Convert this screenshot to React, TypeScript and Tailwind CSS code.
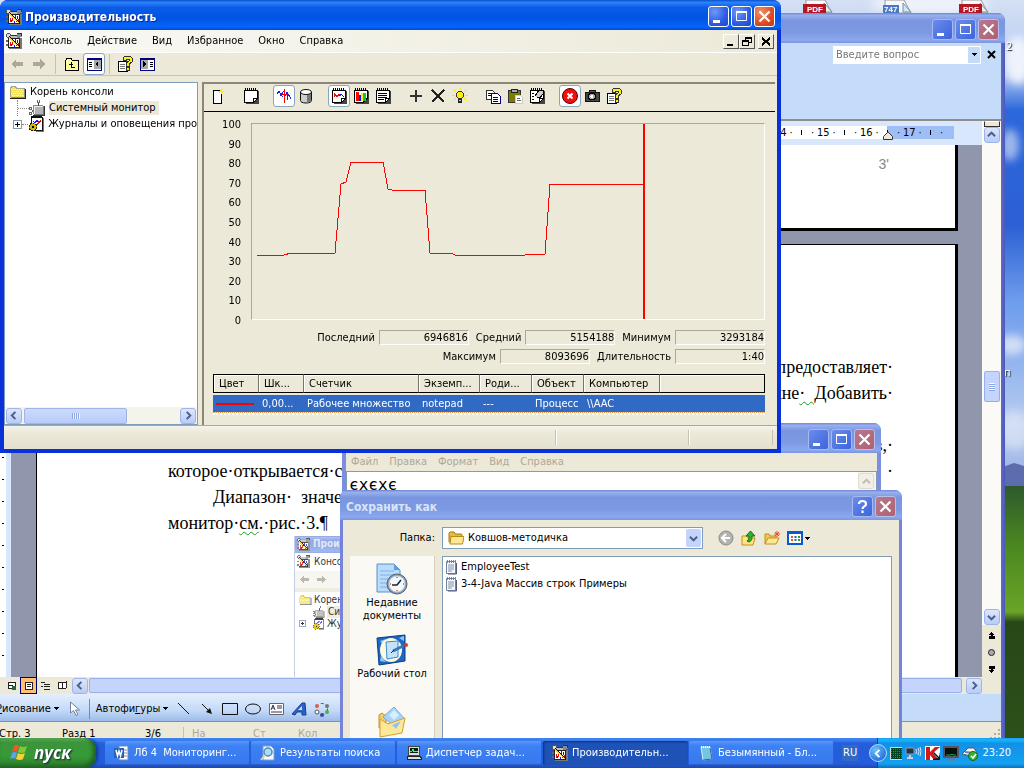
import type { ReactNode } from "react";

const ui = "font-['DejaVu_Sans_Condensed','DejaVu_Sans',sans-serif]";

/* ---------- icons ---------- */

function Px({ w = 16, h = 16, box, children }: { w?: number; h?: number; box?: string; children: ReactNode }) {
  return (
    <svg width={w} height={h} viewBox={box ?? `0 0 ${w} ${h}`} className="block shrink-0" shapeRendering="crispEdges" aria-hidden="true">
      {children}
    </svg>
  );
}

function Smooth({ w = 16, h = 16, box, children }: { w?: number; h?: number; box?: string; children: ReactNode }) {
  return (
    <svg width={w} height={h} viewBox={box ?? `0 0 ${w} ${h}`} className="block shrink-0" fill="none" aria-hidden="true">
      {children}
    </svg>
  );
}

const PerfIcon = () => (
  <Px>
    <path d="M1 0h3v1h1v3H4v1H1V4H0V1h1z" fill="#555" /><path d="M1 1h3v3H1z" fill="#ddd" />
    <path d="M3 3h10v2H3z" fill="#bbb" /><path d="M5 2h6v1H5z" fill="#333" />
    <path d="M11 1h5v3h-2v2h-3z" fill="#888" /><path d="M11 0h5v1h-5zM15 1h1v2h-1z" fill="#333" />
    <path d="M2 5h12v10H2z" fill="#222" /><path d="M3 6h10v8H3z" fill="#fff" />
    <path d="M14 5h2v11H3v-1h11z" fill="#777" /><path d="M0 7h2v2H0zM0 11h2v2H0z" fill="#666" />
    <path d="M4 13V9h1v4zM6 12V8h1v4zM10 13v-3h1v3zM12 14v-4h1v4z" fill="#e01010" /><path d="M5 11h1v2H5zM9 6h1v3H9zM11 7h1v3h-1zM8 12h1v2H8z" fill="#1020e0" />
    <path d="M2 4l1-1 11 11-1 1z" fill="#000" /><path d="M3 4h1v1h1v1h1v1h1v1h1v1h1v1h1v1h1v1h1v1h1v1h-1v-1h-1v-1h-1v-1H9v-1H8v-1H7V9H6V8H5V7H4V6H3z" fill="#ffd820" />
  </Px>
);
const FolderIcon = () => (
  <Px><path d="M0 3h1V2h5v1h1v1h7v10H0z" fill="#f4e45c" /><path d="M1 5h12M2 7h12M1 9h12M2 11h12" stroke="#fffbd0" strokeDasharray="1 1" /><path d="M.5 13V3.500h1V2.500h4v1h1v1h7" fill="none" stroke="#a8a488" /><path d="M0 14.500h15.500V5" stroke="#222" fill="none" /><path d="M1 13.500h13.500V4" stroke="#888" fill="none" /></Px>
);
const MonitorNode = () => (
  <Px><path d="M5 6h9v8H5z" fill="#b4b4b4" /><path d="M5.500 14V6.500H14" stroke="#eee" fill="none" /><path d="M4.500 14V5.500H14" fill="none" stroke="#888" /><path d="M4 15.500h11.500V6" fill="none" stroke="#333" /><path d="M5 14.500h9.500V6" fill="none" stroke="#777" /><path d="M9 3h1v3H9z" fill="#444" /><path d="M8 0h3v3H8z" fill="#666" /><path d="M9 0h1v2H9z" fill="#fff" /><path d="M0 7h3v3H0zM0 12h3v3H0z" fill="#666" /><path d="M1 8h1v1H1zM1 13h1v1H1z" fill="#fff" /><path d="M3 10h1v2H3z" fill="#666" /></Px>
);
const LogsNode = () => (
  <Px><path d="M3 1h11v13H3z" fill="#fff" stroke="#111" /><path d="M3 1h11" stroke="#111" strokeWidth="2" /><path d="M15 2v13H8" stroke="#777" fill="none" /><path d="M5 5l2 2 2-3 2 3 2-3" stroke="#11e" fill="none" /><path d="M8 10l5-6" stroke="#e11" /><circle cx="5" cy="11" r="4" fill="#d8b800" stroke="#222" strokeDasharray="2 1" /><path d="M4 10h2v2H4z" fill="#000" /></Px>
);
const ArrowGray = ({ flip }: { flip?: boolean }) => (
  <Px><path d={flip ? "M14 8l-5-5v3H2v4h7v3z" : "M2 8l5-5v3h7v4H7v3z"} fill="#aca899" /></Px>
);
const UpFolder = () => (
  <Px><path d="M1 4h1l1-2h4l1 2h6v10H1z" fill="#fffba0" stroke="#000" /><path d="M5 8h4M7 6v5h4" stroke="#000" fill="none" /><path d="M6 7h2V6h-1z" fill="#000" /></Px>
);
const Panes = ({ flip }: { flip?: boolean }) => (
  <Px><path d="M1 2h14v12H1z" fill="#fff" stroke="#000080" /><path d="M1 2h14v2H1z" fill="#000080" />{flip ? <><path d="M2 4h7v9H2z" fill="#aaa" /><path d="M4 5v6l3-3z" fill="#000" /><path d="M11 6h3M11 8h3M11 10h3" stroke="#000" /></> : <><path d="M8 4h7v9H8z" fill="#aaa" /><path d="M12 5v6L9 8z" fill="#000" /><path d="M3 6h3M3 8h3M3 10h3" stroke="#000" /></>}</Px>
);
const HelpPage = () => (
  <Px><path d="M1 5h9v10H1z" fill="#fff" stroke="#000" /><path d="M3 8h5M3 10h5M3 12h5" stroke="#777" /><path d="M6 4V2l2-2h5l2 2v4l-3 2v2H9V7l3-2V3H9v2z" fill="#ffee10" stroke="#333" /><path d="M9 11h3v3H9z" fill="#ffee10" stroke="#333" /></Px>
);
const NewPage = () => (
  <Px><path d="M3 2h8v13H3z" fill="#fff" stroke="#000" /><path d="M11 0v6M8 3h6M9 1l4 4M13 1l-4 4" stroke="#ffee00" /></Px>
);
const Pad = ({ children }: { children?: ReactNode }) => (
  <Px>
    <path d="M3 3h13v13H3z" fill="#444" /><path d="M1 2h13v9l-3 3H1z" fill="#fff" stroke="#000" />
    <path d="M10 14v-4h4" fill="none" stroke="#000" /><path d="M2 1h12" stroke="#000" strokeWidth="2" strokeDasharray="1 1" />{children}
  </Px>
);
const Activity = () => (
  <Px><path d="M1 6l2-3 2 4 2 2M9 8l2-4 4 7" stroke="#1020ff" fill="none" /><path d="M8 1v14M6 6h5" stroke="#f00" /><path d="M4 8l4-5M11 6v6" stroke="#1020ff" /></Px>
);
const Cylinder = () => (
  <Smooth><path d="M2.500 4v8.500c0 1.500 2 2.500 5.500 2.500s5.500-1 5.500-2.500V4" fill="#ccc" stroke="#111" /><path d="M9 6h4v7l-4 2z" fill="#777" /><ellipse cx="8" cy="4" rx="5.500" ry="2.500" fill="#fff" stroke="#111" /></Smooth>
);
const Plus = () => <Px><path d="M8 2v12M2 8h12" stroke="#333" strokeWidth="2" /></Px>;
const Cross = () => <Px><path d="M2 2l12 12M14 2L2 14" stroke="#222" strokeWidth="1.500" /></Px>;
const Bulb = () => (
  <Px><path d="M1 1l3 3M15 1l-3 3M0 7h3M13 7h3M1 13l3-3M15 13l-3-3M8 0v2" stroke="#f4e800" /><circle cx="8" cy="7" r="3.500" fill="#ffee00" stroke="#333" /><path d="M6 11h4v4H6z" fill="#222" /><path d="M7 12h2v1H7z" fill="#ccc" /></Px>
);
const CopyIcon = () => (
  <Px><path d="M1 2h6l2 2v7H1z" fill="#fff" stroke="#333" /><path d="M3 5h4M3 7h4" stroke="#000080" /><path d="M6 5h6l3 3v7H6z" fill="#fff" stroke="#000080" /><path d="M8 9h5M8 11h5M8 13h5" stroke="#000080" /></Px>
);
const PasteIcon = () => (
  <Px><path d="M1 2h12v12H1z" fill="#7c7a00" stroke="#333" /><path d="M4 1h6v3H4z" fill="#aaa" stroke="#222" /><path d="M8 7h5l2 2v6H8z" fill="#fff" stroke="#ccc" /><path d="M10 10h3M10 12h4" stroke="#666" /></Px>
);
const PropsIcon = () => (
  <Pad><path d="M3 5h2M3 8h2M3 11h2" stroke="#000" /><path d="M6 8l4-6 4 1v3l-3 4-3-1" fill="#ccc" stroke="#000" /></Pad>
);
const Camera = () => (
  <Px><path d="M5 2h6v3H5z" fill="#555" stroke="#111" /><path d="M1 4h14v9H1z" fill="#444" stroke="#111" /><circle cx="8" cy="8.500" r="3.500" fill="#aaa" stroke="#000" /><circle cx="8" cy="8.500" r="1.500" fill="#fff" /></Px>
);
const StopIcon = () => (
  <Smooth><circle cx="8" cy="8" r="7.500" fill="#f01010" stroke="#500" /><path d="M5.500 5.500l5 5M10.500 5.500l-5 5" stroke="#fff" strokeWidth="2" /></Smooth>
);
const Note = () => (
  <Smooth><path d="M3.500 2.500h9v12h-9z" fill="#f6f8ff" stroke="#7080a0" /><path d="M4 2.500h9" stroke="#c07820" strokeWidth="3" strokeDasharray="1 1" /><path d="M5 6h6M5 8h6M5 10h6M5 12h4" stroke="#8090a8" /><path d="M13.500 4v11H5" stroke="#555c78" /></Smooth>
);
const YellowFolder = () => (
  <Smooth><path d="M1 3.500Q1 2 2.500 2H6l1.500 2H13q1 0 1 1v7H1z" fill="#e8b840" stroke="#a87810" /><path d="M2 14l1-7.500h13L14.500 14z" fill="#ffe890" stroke="#b88a18" /></Smooth>
);
const Chevron = ({ dir, color = "#4d6185" }: { dir: "l" | "r" | "u" | "d"; color?: string }) => {
  const d = { l: "M6 1L2 5l4 4", r: "M3 1l4 4-4 4", u: "M1 7l4-4 4 4", d: "M1 3l4 4 4-4" }[dir];
  return <Smooth w={9} h={9} box="0 0 10 10"><path d={d} stroke={color} strokeWidth="2.200" /></Smooth>;
};
const Caret = () => <Px w={5} h={3}><path d="M0 0h5L2.500 3z" fill="#000" /></Px>;

/* ---------- shared controls ---------- */

type CapKind = "min" | "max" | "close" | "help";
function CaptionButton({ kind, active }: { kind: CapKind; active?: boolean }) {
  const tone = kind === "close"
    ? active ? "bg-[radial-gradient(circle_at_30%_25%,#f09070,#dc4c22_60%,#c03812)] border-white" : "bg-[linear-gradient(135deg,#b87890,#b06070)] border-[#b9bfe6]"
    : active ? "bg-[radial-gradient(circle_at_30%_25%,#7098f8,#2a5ce4_60%,#1c48c8)] border-white" : "bg-[linear-gradient(135deg,#6a8cec,#3c64dc)] border-[#a8b8f0]";
  const name = { min: "Свернуть", max: "Развернуть", close: "Закрыть", help: "Подсказка" }[kind];
  return (
    <button aria-label={name} className={`flex size-[21px] items-center justify-center rounded-[3px] border ${tone}`}>
      <Smooth w={19} h={19}>
        {kind === "min" && <path d="M4 13h7v3H4z" fill="#fff" />}
        {kind === "max" && <><path d="M4.500 5.500h10v8h-10z" stroke="#fff" /><path d="M4 4h11v2H4z" fill="#fff" /></>}
        {kind === "close" && <path d="M4.500 4.500l10 10M14.500 4.500l-10 10" stroke="#fff" strokeWidth="2.200" />}
        {kind === "help" && <path d="M6 7q0-3 3.500-3T13 7q0 1.500-1.700 2.400T9.500 12M9.500 13.500V16" stroke="#fff" strokeWidth="2.200" />}
      </Smooth>
    </button>
  );
}

const activeTitle = "bg-[linear-gradient(#0a50d0_0%,#2c82f8_8%,#0a5ce8_25%,#0054e3_60%,#0664fc_90%,#0048d0_100%)]";
const idleTitle = "bg-[linear-gradient(#7088d0_0%,#98b0ee_8%,#7b96e0_25%,#7d99e2_65%,#8aa8f0_90%,#7b96dc_100%)]";

function TitleBar({ title, icon, kinds, active }: { title: string; icon?: ReactNode; kinds: CapKind[]; active?: boolean }) {
  return (
    <header className={`flex h-[30px] items-center gap-[3px] rounded-t-[7px] pt-[3px] pr-[6px] pl-[6px] ${active ? activeTitle : idleTitle}`}>
      {icon}
      <h2 className={`grow text-xs font-bold whitespace-nowrap ${active ? "text-white [text-shadow:1px_1px_#0a2a88]" : "text-[#d8e4f8]"}`}>{title}</h2>
      <div className="flex gap-[2px]">{kinds.map((k) => <CaptionButton key={k} kind={k} active={active} />)}</div>
    </header>
  );
}

function ScrollButton({ dir, off }: { dir: "l" | "r" | "u" | "d"; off?: boolean }) {
  return (
    <button aria-label="Прокрутка" className={`flex size-4 shrink-0 items-center justify-center rounded-[3px] border ${off ? "border-[#dddbd0] bg-[#f2f0e6]" : "border-[#9fb5e8] bg-[linear-gradient(#dce6fe,#b8ccf8)]"}`}>
      <Chevron dir={dir} color={off ? "#c2c0b4" : undefined} />
    </button>
  );
}

function Tool({ label, on, children }: { label: string; on?: boolean; children: ReactNode }) {
  return (
    <button aria-label={label} className={`flex h-[22px] w-[22px] shrink-0 items-center justify-center rounded-[3px] border ${on ? "border-[#8aa5c0] bg-white" : "border-transparent"}`}>
      {children}
    </button>
  );
}

/* ---------- performance window ---------- */

const series: [number, number][] = [
  [5, 131], [32, 131], [39, 129], [83, 129], [89, 60], [94, 58], [99, 38], [131, 38], [136, 65], [140, 66], [173, 66],
  [178, 129], [199, 129], [203, 131], [273, 131], [278, 130], [293, 130], [298, 60], [392, 60],
];

function Readout({ id, label, value }: { id: string; label: string; value: string }) {
  return (
    <div className="flex items-center gap-1">
      <label htmlFor={id}>{label}</label>
      <input id={id} readOnly value={value} className="h-[15px] w-[90px] border border-t-[#aca899] border-r-white border-b-white border-l-[#aca899] bg-transparent text-right outline-none" />
    </div>
  );
}

const columns = [
  { name: "Цвет", w: "w-[46px]" }, { name: "Шк...", w: "w-[45px]" }, { name: "Счетчик", w: "w-[115px]" },
  { name: "Экземп...", w: "w-[61px]" }, { name: "Роди...", w: "w-[52px]" }, { name: "Объект", w: "w-[52px]" }, { name: "Компьютер", w: "w-[76px]" }, { name: "", w: "w-auto" },
];

function SystemMonitor() {
  const groups: { label: string; on?: boolean; icon: ReactNode }[][] = [
    [{ label: "Новый набор счетчиков", icon: <NewPage /> }],
    [{ label: "Очистить экран", icon: <Pad /> }],
    [{ label: "Текущая активность", on: true, icon: <Activity /> }, { label: "Данные журнала", icon: <Cylinder /> }],
    [
      { label: "График", on: true, icon: <Pad><path d="M3 9V5l3 4 2-3 2 2" stroke="#f00" fill="none" /><path d="M8 8l2-2 3 3" stroke="#11f" fill="none" /></Pad> },
      { label: "Гистограмма", icon: <Pad><path d="M3 4h3v9H3z" fill="#f00" /><path d="M6 7h2v6H6z" fill="#11f" /><path d="M8 5h2v8H8z" fill="#fe0" /><path d="M10 5h3v8h-3z" fill="#0c3" /></Pad> },
      { label: "Отчет", icon: <Pad><path d="M3 5h9M3 7h9M3 9h9M3 11h6" stroke="#000" /></Pad> },
    ],
    [{ label: "Добавить", icon: <Plus /> }, { label: "Удалить", icon: <Cross /> }, { label: "Выделить", icon: <Bulb /> }],
    [{ label: "Копировать", icon: <CopyIcon /> }, { label: "Вставить", icon: <PasteIcon /> }, { label: "Свойства", icon: <PropsIcon /> }],
    [{ label: "Зафиксировать", on: true, icon: <StopIcon /> }, { label: "Обновить", icon: <Camera /> }, { label: "Справка", icon: <HelpPage /> }],
  ];
  return (
    <section className="flex min-w-0 grow flex-col border-t-2 border-l-2 border-[#8a877a]">
      <div className="flex h-[28px] items-center gap-[11px] border-b border-black pb-[3px] pl-[3px]">
        {groups.map((g, i) => (
          <div key={i} className="flex">{g.map((t) => <Tool key={t.label} label={t.label} on={t.on}>{t.icon}</Tool>)}</div>
        ))}
      </div>
      <div className="flex gap-[10px] pt-[6px] pr-[10px]">
        <div className="-mb-2 flex w-[37px] flex-col justify-between text-right leading-[14px]">
          {[100, 90, 80, 70, 60, 50, 40, 30, 20, 10, 0].map((n) => <span key={n}>{n}</span>)}
        </div>
        <div className="mt-[5px] h-[197px] grow border border-t-[#aca899] border-r-white border-b-white border-l-[#aca899]">
          <svg width="100%" height="195" viewBox="0 0 512 195" preserveAspectRatio="none" className="block" shapeRendering="crispEdges">
            <polyline points={series.map((p) => p.join(",")).join(" ")} fill="none" stroke="#f00" />
            <path d="M392 0v195" stroke="#f00" strokeWidth="2" />
          </svg>
        </div>
      </div>
      <div className="mt-[10px] flex flex-col items-end gap-1 pr-[10px]">
        <div className="flex gap-[7px]">
          <Readout id="last" label="Последний" value="6946816" /><Readout id="avg" label="Средний" value="5154188" /><Readout id="min" label="Минимум" value="3293184" />
        </div>
        <div className="flex gap-[7px]">
          <Readout id="max" label="Максимум" value="8093696" /><Readout id="dur" label="Длительность" value="1:40" />
        </div>
      </div>
      <div className="mt-[10px] mr-[10px] ml-[9px]">
        <table className="w-full table-fixed border-separate border-spacing-0 text-left whitespace-nowrap">
          <thead>
            <tr>
              {columns.map((c, i) => (
                <th key={i} className={`${c.w} h-[19px] overflow-hidden border-t border-r border-b border-t-black border-r-[#77746a] border-b-black pl-[5px] font-normal shadow-[inset_1px_1px_#fff] first:border-l first:border-l-black last:border-r-black`}>{c.name}</th>
              ))}
            </tr>
          </thead>
          <tbody>
            <tr className="text-white [&>td]:h-[19px] [&>td]:border-t-2 [&>td]:border-[#ece9d8] [&>td]:bg-[#316ac5] [&>td]:pl-[3px]">
              <td><svg width="38" height="2" className="block" aria-hidden="true"><path d="M0 0h38v2H0z" fill="#f00" /></svg></td>
              <td>0,00...</td><td>Рабочее множество</td><td>notepad</td><td>---</td><td>Процесс</td><td>\\AAC</td><td />
            </tr>
          </tbody>
        </table>
        <div className="border-t border-b-2 border-dotted border-t-[#e0a050] border-b-white" />
      </div>
    </section>
  );
}

function ConsoleTree() {
  return (
    <aside className="flex w-[194px] shrink-0 flex-col overflow-hidden border border-[#7f9db9] bg-white">
      <ul className="grow pt-[1px] whitespace-nowrap [&>li]:flex [&>li]:h-4 [&>li]:items-center [&>li]:gap-1">
        <li className="pl-[5px]"><FolderIcon />Корень консоли</li>
        <li className="pl-3"><span className="-mr-1 h-full w-3 border-l border-dotted border-[#888] pt-2 before:block before:border-t before:border-dotted before:border-[#888]" /><MonitorNode /><span className="bg-[#ece9d8] pr-1">Системный монитор</span></li>
        <li className="pl-2">
          <Px w={9} h={9}><path d="M0 0h9v9H0z" fill="#7f9db9" /><path d="M1 1h7v7H1z" fill="#fff" /><path d="M2 4h5v1H2zM4 2h1v5H4z" fill="#000" /></Px>
          <span className="-mx-1 w-[10px] border-t border-dotted border-[#888]" /><LogsNode /><span className="min-w-0 overflow-hidden">Журналы и оповещения производительности</span>
        </li>
      </ul>
      <div className="flex h-[17px] items-center gap-[2px] bg-[#f4f3ec] px-px">
        <ScrollButton dir="l" />
        <div className="flex h-4 w-[103px] items-center justify-center gap-px rounded-[2px] border border-[#9fb5e8] bg-[linear-gradient(#cbdafd,#b9ccf9)]">
          {[0, 1, 2, 3].map((i) => <i key={i} className="h-[6px] w-px bg-[#8ca6e0] shadow-[1px_0_#eef4fe]" />)}
        </div>
        <div className="ml-auto"><ScrollButton dir="r" /></div>
      </div>
    </aside>
  );
}

function PerformanceWindow() {
  return (
    <section className="absolute top-0 left-0 flex h-[453px] w-[781px] flex-col overflow-hidden rounded-t-[8px] bg-[#0831d9]">
      <TitleBar title="Производительность" icon={<PerfIcon />} kinds={["min", "max", "close"]} active />
      <div className="mx-1 mb-1 flex grow flex-col bg-[#ece9d8]">
        <nav className="flex h-[23px] items-center border-b border-white bg-[linear-gradient(90deg,#fafaf6,#ece9d8)] pl-[2px]">
          <PerfIcon />
          <div className="flex grow gap-[15px] pl-[7px]">
            {["Консоль", "Действие", "Вид", "Избранное", "Окно", "Справка"].map((m) => <button key={m}>{m}</button>)}
          </div>
          <div className="flex pr-[3px] [&>button]:flex [&>button]:h-[15px] [&>button]:w-4 [&>button]:items-center [&>button]:justify-center [&>button]:border [&>button]:border-t-white [&>button]:border-r-[#555] [&>button]:border-b-[#555] [&>button]:border-l-white">
            <button aria-label="Свернуть окно"><Px w={10} h={9}><path d="M1 7h6v2H1z" /></Px></button>
            <button aria-label="Восстановить окно"><Px w={10} h={9}><path d="M3 0h7v6H3z" /><path d="M4 2h5v3H4z" fill="#ece9d8" /><path d="M0 3h7v6H0z" /><path d="M1 5h5v3H1z" fill="#ece9d8" /></Px></button>
            <button aria-label="Закрыть окно" className="ml-[3px]"><Px w={10} h={9}><path d="M1 1l8 7M9 1L1 8" stroke="#000" strokeWidth="2" /></Px></button>
          </div>
        </nav>
        <div className="flex h-[23px] items-center border-b border-[#c8c5b4] pl-[2px]">
          <Tool label="Назад"><ArrowGray /></Tool>
          <Tool label="Вперед"><ArrowGray flip /></Tool>
          <i className="mx-[5px] h-5 w-px bg-[#c5c2b2]" />
          <Tool label="На уровень вверх"><UpFolder /></Tool>
          <Tool label="Дерево консоли" on><Panes /></Tool>
          <i className="mx-1 h-5 w-px bg-[#c5c2b2]" />
          <Tool label="Справка"><HelpPage /></Tool>
          <Tool label="Панель действий"><Panes flip /></Tool>
        </div>
        <div className="mt-[6px] flex h-[343px] gap-1 pr-[2px]"><ConsoleTree /><SystemMonitor /></div>
        <footer className="flex grow border-t border-[#aca899] bg-[linear-gradient(#f5f4ec,#ece9d8_30%,#e4e1d0)] py-1">
          <i className="grow" /><i className="w-[133px] border-l border-[#c5c2b2] shadow-[inset_1px_0_#fff]" /><i className="w-[85px] border-x border-[#c5c2b2] shadow-[inset_1px_0_#fff]" /><i className="w-[4px]" />
        </footer>
      </div>
    </section>
  );
}

/* ---------- word processor ---------- */

const rulerUnits = ["14", "15", "16", "17"];

function PictureInDocument() {
  return (
    <figure className="ml-[126px] h-[150px] w-[420px] overflow-hidden border-l border-[#b8c4e0] bg-white whitespace-nowrap opacity-80">
      <div className={`flex h-[17px] items-center gap-[3px] pl-[2px] text-[10px] font-bold text-[#d8e4f8] ${idleTitle}`}><Px w={13} h={13} box="0 0 16 16"><PerfIcon /></Px>Производительность</div>
      <div className="flex h-[18px] items-center gap-1 pl-[2px] text-[10px]"><Px w={13} h={13} box="0 0 16 16"><PerfIcon /></Px>Консоль</div>
      <div className="flex h-[21px] items-center gap-1 border-b-4 border-[#ece9d8] bg-[#f6f5ee] pl-[3px]"><Px w={13} h={13} box="0 0 16 16"><ArrowGray /></Px><Px w={13} h={13} box="0 0 16 16"><ArrowGray flip /></Px></div>
      <div className="pl-1 text-[10px] leading-3 [&>p]:flex [&>p]:items-center [&>p]:gap-[2px]">
        <p className="pt-[2px]"><Px w={13} h={12} box="0 0 16 16"><FolderIcon /></Px>Корень консоли</p>
        <p className="pl-[13px]"><Px w={13} h={12} box="0 0 16 16"><MonitorNode /></Px><span className="bg-[#ece9d8] px-px">Системный монитор</span></p>
        <p><Px w={7} h={7}><path d="M0 0h7v7H0z" fill="#7f9db9" /><path d="M1 1h5v5H1z" fill="#fff" /><path d="M2 3h3v1H2zM3 2h1v3H3z" /></Px><span className="w-[2px]" /><Px w={13} h={12} box="0 0 16 16"><LogsNode /></Px>Журналы и оповещения</p>
      </div>
    </figure>
  );
}

function DocumentPage() {
  const squiggle = "underline decoration-[#1a9a1a] decoration-wavy decoration-1 underline-offset-2";
  return (
    <article className="mt-[13px] flex grow flex-col border-t border-r-[3px] border-l border-black bg-white pr-[62px] pl-[131px] font-['Liberation_Serif',serif] text-[18px] leading-[26px] whitespace-pre text-black">
      <div className="mt-[109px] [&>p]:flex [&>p]:h-[26px] [&>p]:justify-between">
        <p><span /><span>предоставляет·</span></p>
        <p><span /><span>окне<span className={squiggle}>·  Д</span>обавить·</span></p>
        <p />
        <p><span /><span>параметров,·</span></p>
        <p><span>которое·открывается·с</span><span>·</span></p>
        <p><span className="pl-[45px]">Диапазон·  значений</span></p>
        <p><span>монитор·<span className={squiggle}>см</span>.·рис.·3.¶</span></p>
      </div>
      <div className={`${ui} text-[10px]`}><PictureInDocument /></div>
    </article>
  );
}

function WordWindow() {
  return (
    <section className="absolute top-[13px] left-[-8px] flex h-[740px] w-[1013px] flex-col rounded-t-[8px] bg-[linear-gradient(90deg,#6278d0,#7b8ee0_99%,#4c58b8)]">
      <TitleBar title="" kinds={["min", "max", "close"]} />
      <div className="mx-1 flex min-h-0 grow flex-col bg-[#c4dbf9]">
        <div className="flex h-[78px] shrink-0 items-start justify-end gap-[6px] border-b-2 border-[#8d8d8d] pt-[3px] pr-1">
          <div className="flex h-[18px] w-[148px] bg-white">
            <input aria-label="Введите вопрос" placeholder="Введите вопрос" className="min-w-0 grow bg-transparent px-[3px] outline-none placeholder:text-[#777]" />
            <button aria-label="Список вопросов" className="m-px flex w-3 items-center justify-center bg-[#c4dbf9]"><Caret /></button>
          </div>
          <button aria-label="Закрыть документ" className="pt-1"><Smooth w={10} h={10}><path d="M1 1l7 7M8 1L1 8" stroke="#000" strokeWidth="2" /></Smooth></button>
        </div>
        <div className="flex min-h-0 grow">
          <div className="flex min-w-0 grow flex-col">
            <div className="h-6 shrink-0 bg-[#d8e7fc] pt-[5px] pr-[28px]">
              <div className="relative flex h-[13px] justify-end bg-[linear-gradient(to_left,#9ebef5_67px,#fff_67px)] pr-[7px] leading-[13px]">
                {rulerUnits.map((n) => (
                  <div key={n} className="grid w-[43px] grid-cols-4 text-center"><span className="-mx-1">{n}</span><span>·</span><i className="mx-auto mt-1 h-[5px] w-px bg-black" /><span>·</span></div>
                ))}
                <div className="absolute top-[5px] right-[61px]"><Smooth w={10} h={9}><path d="M.5 8.500v-3L5 1l4.500 4.500v3z" fill="#ece9d8" stroke="#333" /></Smooth></div>
              </div>
            </div>
            <div className="flex min-h-0 grow overflow-hidden bg-[#9097ac]">
              <div className="flex w-[15px] shrink-0 flex-col items-center gap-[21px] border-r-[5px] border-[#d8e7fc] bg-white pt-1">
                {Array.from({ length: 24 }, (_, i) => <i key={i} className="ml-1 h-px w-[2px] shrink-0 bg-black" />)}
              </div>
              <div className="flex min-w-0 grow flex-col pr-6 pl-[25px]">
                <div className="flex h-[86px] shrink-0 justify-end border-r-[3px] border-b-[3px] border-l border-black bg-white pt-[11px] pr-[66px] font-['Liberation_Sans',sans-serif] text-sm leading-4 text-[#888]">3'</div>
                <DocumentPage />
              </div>
            </div>
            <div className="flex h-[17px] shrink-0 items-center bg-[#ece9d8] pl-[7px]">
              <div className="flex pr-px [&>button]:flex [&>button]:size-[17px] [&>button]:items-center [&>button]:justify-center">
                <button aria-label="Веб-документ"><Px w={9} h={9}><path d="M1 1h7v6H1zM2 4h4" fill="#fff" stroke="#222" /><path d="M5 5h4v4H5z" fill="#264" /></Px></button>
                <button aria-label="Разметка страницы" className="border border-[#000080] bg-[#ffc070]"><Px w={9} h={9}><path d="M1 1h7v7H1z" fill="#fff" stroke="#222" /><path d="M3 3h4M3 5h4" stroke="#222" /></Px></button>
                <button aria-label="Структура"><Px w={9} h={9}><path d="M0 1h4M3 3h6M0 5h2M3 5h6M3 8h6" stroke="#222" /></Px></button>
                <button aria-label="Режим чтения"><Px w={9} h={9}><path d="M0 1l4 1 4-1v6L4 8 0 7zM4 2v6" fill="#fff" stroke="#222" /></Px></button>
              </div>
              <ScrollButton dir="l" />
              <div className="mr-1 ml-px h-[15px] grow rounded-[2px] border border-[#98b0e8] bg-[#c4d4fc]" />
              <ScrollButton dir="r" />
            </div>
          </div>
          <div className="flex w-[19px] shrink-0 flex-col items-center bg-[#fbfaf6]">
            <div className="h-[6px] w-4 shrink-0 border border-[#333] border-t-white bg-[#ece9d8]" />
            <ScrollButton dir="u" />
            <div className="mt-[228px] flex h-[31px] w-4 shrink-0 flex-col items-center justify-center gap-px rounded-[2px] border border-[#98b0e8] bg-[#c4d4fc]">
              {[0, 1, 2, 3].map((i) => <i key={i} className="h-px w-[6px] bg-[#f4f8ff] shadow-[0_1px_#8ca6e0]" />)}
            </div>
            <div className="mt-auto"><ScrollButton dir="d" /></div>
            <div className="flex h-[69px] w-full shrink-0 flex-col items-center gap-[9px] bg-[#ece9d8] pt-[7px]">
              <Px w={7} h={7}><path d="M3.500 0l3 3h-2v1h2v3h-6V4h2V3h-2z" /></Px>
              <Smooth w={9} h={9}><circle cx="4.500" cy="4.500" r="3" fill="#aaa" stroke="#222" /></Smooth>
              <Px w={7} h={7}><path d="M3.500 7l3-3h-2V3h2V0h-6v3h2v1h-2z" /></Px>
            </div>
          </div>
        </div>
        <div className="flex h-[28px] shrink-0 items-center border-b border-[#8d8d8d] bg-[linear-gradient(90deg,transparent_40%,#c4dbf9_41%),linear-gradient(#e4eefd,#c4daf8_60%,#9dbce8)] pt-[2px] whitespace-nowrap">
          <button className="flex items-center gap-[3px]"><span><u>Р</u>исование</span><Caret /></button>
          <button aria-label="Выбор объектов" className="ml-2"><Smooth><path d="M3.500 1v11l3-2.500 2.500 5 2-1-2.500-4.500h4z" fill="#fff" stroke="#7080a0" /></Smooth></button>
          <i className="mx-[6px] h-5 w-px bg-[#6a8ccb]" />
          <button className="flex items-center gap-[3px]"><span>Автофи<u>г</u>уры</span><Caret /></button>
          <div className="ml-2 flex gap-[7px]">
            <button aria-label="Линия"><Smooth><path d="M2 2l11 11" stroke="#111" /></Smooth></button>
            <button aria-label="Стрелка"><Smooth><path d="M3 3l7 7" stroke="#111" /><path d="M13 13l-6-2 4-4z" fill="#111" /></Smooth></button>
            <button aria-label="Прямоугольник"><Smooth><path d="M.5 2.500h15v11H.500z" stroke="#111" /></Smooth></button>
            <button aria-label="Овал"><Smooth><ellipse cx="8" cy="8" rx="7.500" ry="5" stroke="#111" /></Smooth></button>
            <button aria-label="Надпись"><Smooth><path d="M1.500 2.500h14v11h-14z" fill="#fff" stroke="#666" /><path d="M3 9l2-5 2 5M4 7h2M9 5h5M9 7h5M3 11h11" stroke="#335" /></Smooth></button>
            <button aria-label="Фигурный текст"><Smooth><path d="M1 13L11 2h3l1 12h-4v-3H6l-2 3z" fill="#2f62c8" stroke="#16408c" /><path d="M7 9l4-4v4z" fill="#cfe0fa" /></Smooth></button>
            <button aria-label="Диаграмма"><Smooth><circle cx="8" cy="8" r="5.500" stroke="#444" strokeDasharray="3 3" /><circle cx="3" cy="5" r="2" fill="#e06040" /><circle cx="13" cy="5" r="2" fill="#777" /><circle cx="3" cy="11" r="2" fill="#fff" stroke="#555" /><circle cx="8" cy="14" r="2" fill="#44a" /><circle cx="13" cy="11" r="2" fill="#5a5" /></Smooth></button>
          </div>
        </div>
        <footer className="flex h-[31px] shrink-0 items-start bg-[#ece9d8] pt-[5px] pl-[3px] leading-[14px]">
          <span className="w-[63px]">Стр. 3</span><span className="w-[83px]">Разд 1</span><span className="w-[38px]">3/6</span>
          <span className="flex h-5 grow border-l border-[#c5c2b2] pl-2 text-[#aca899]"><span className="w-[61px]">На</span><span className="w-[45px]">Ст</span><span>Кол</span></span>
          <Smooth w={14} h={14}><path d="M12 2v2M8 6v2M12 6v2M4 10v2M8 10v2M12 10v2" stroke="#b0ad9c" strokeWidth="2" /></Smooth>
        </footer>
      </div>
    </section>
  );
}

/* ---------- notepad and save dialog ---------- */

function NotepadWindow() {
  return (
    <section className="absolute top-[423px] left-[342px] flex h-[320px] w-[539px] flex-col rounded-t-[8px] bg-[#7b8ee0]">
      <TitleBar title="Безымянный - Блокнот" kinds={["min", "max", "close"]} />
      <div className="mx-1 flex grow flex-col bg-[#ece9d8]">
        <nav className="flex h-[18px] items-center gap-[11px] pl-[5px] text-[#aca899]">
          {["Файл", "Правка", "Формат", "Вид", "Справка"].map((m) => <button key={m}>{m}</button>)}
        </nav>
        <div className="flex grow border border-[#7f9db9] bg-white">
          <textarea aria-label="Текст" defaultValue="єхєхє" className="grow resize-none px-[2px] pt-[3px] font-['DejaVu_Sans_Mono',monospace] text-base leading-5 text-black outline-none" />
          <div className="w-[18px] bg-[#f4f3ec] pt-px"><ScrollButton dir="u" off /></div>
        </div>
      </div>
    </section>
  );
}

const RecentIcon = () => (
  <Smooth w={34} h={34}>
    <path d="M2 2h17l6 6v22H2z" fill="#b8dcfa" stroke="#5c90c8" /><path d="M19 2v6h6z" fill="#5ca0e0" /><path d="M5 9h14M5 13h14M5 17h10M5 21h10M5 25h10" stroke="#7cb0e4" />
    <circle cx="22" cy="22" r="10" fill="#8898b8" stroke="#566" /><circle cx="22" cy="22" r="8" fill="#f2f9ff" stroke="#c0d0e0" /><path d="M22 15v1M22 28v1M15 22h1M28 22h1" stroke="#e06010" strokeWidth="1.500" /><path d="M26 18l-4 5h-5" stroke="#223" strokeWidth="1.500" />
  </Smooth>
);
const DesktopIcon = () => (
  <Smooth w={34} h={34}>
    <path d="M2 5l28-3v26L4 32z" fill="#1c68c4" stroke="#0c3c88" /><path d="M5 8l6-2-3 6zM24 5l5 3v-5zM5 28l6 1-5-6z" fill="#8cc8f8" /><ellipse cx="16" cy="17" rx="11" ry="12" fill="#fffae0" /><path d="M11 9l12-1v16l-11 2z" fill="#c4e4fc" stroke="#3c88d0" /><path d="M18 18l10-5" stroke="#3878b8" strokeWidth="3" /><circle cx="31" cy="12" r="2" fill="#d04020" /><path d="M16 20l3-3" stroke="#222" />
  </Smooth>
);
const DocsIcon = () => (
  <Smooth w={34} h={34}>
    <path d="M4 10l3-2 4 3v12H4z" fill="#f4cc60" stroke="#c89428" /><path d="M8 12L19 2l10 11-9 9z" fill="#a8d4f8" stroke="#78acdc" /><path d="M14 10l5-5 5 5-5 5z" fill="#d8eefe" /><path d="M5 32V14l8 5 17-6-3 15z" fill="#fde89a" stroke="#d0a030" /><path d="M17 20l9-4-5 8z" fill="#90c4f0" />
  </Smooth>
);

function SaveDialog() {
  const places = [
    { lines: ["Недавние", "документы"], icon: <RecentIcon />, h: "h-[71px]" },
    { lines: ["Рабочий стол"], icon: <DesktopIcon />, h: "h-[72px]" },
    { lines: ["Мои", "документы"], icon: <DocsIcon />, h: "h-[72px]" },
  ];
  return (
    <section className="absolute top-[490px] left-[340px] flex h-[380px] w-[562px] flex-col rounded-t-[8px] bg-[#7484dc]">
      <TitleBar title="Сохранить как" kinds={["help", "close"]} />
      <div className="mx-[3px] flex min-h-0 grow flex-col bg-[#ece9d8] pt-[7px] pr-[7px] pl-[7px]">
        <div className="flex items-center">
          <label htmlFor="folder" className="w-[92px] pr-[7px] text-right">Папка:</label>
          <div className="flex h-[22px] w-[261px] items-center gap-1 border border-[#7f9db9] bg-white pr-px pl-[5px]">
            <YellowFolder />
            <select id="folder" className="grow appearance-none bg-transparent outline-none"><option>Ковшов-методичка</option></select>
            <span className="flex h-[18px] w-[15px] items-center justify-center rounded-[2px] bg-[#c4d4fc]"><Chevron dir="d" /></span>
          </div>
          <div className="ml-[15px] flex gap-[7px]">
            <button aria-label="Назад"><Smooth><circle cx="8" cy="8" r="7" fill="#b4b4ae" stroke="#8c8c88" /><path d="M8 4L4 8l4 4M4 8h8" stroke="#fff" strokeWidth="2" /></Smooth></button>
            <button aria-label="Вверх"><Smooth><path d="M1 6h5l1 2h7l-2 7H1z" fill="#ffe480" stroke="#c09020" /><path d="M8 12c3-1 3-4 3-6h3L9.500 1 5 6h3c0 2 0 4-2 5z" fill="#30b030" stroke="#107010" /></Smooth></button>
            <button aria-label="Создать папку"><Smooth><path d="M1 14V4h4l1 2h6v3" fill="#f0c850" stroke="#c09020" /><path d="M1 14l3-6h11l-3 6z" fill="#ffe890" stroke="#c09020" /><path d="M13 1v6M10 4h6M11 2l4 4M15 2l-4 4" stroke="#f05020" /></Smooth></button>
            <button aria-label="Вид" className="flex items-center gap-[2px]"><Smooth><path d="M1 2h14v12H1z" fill="#fff" stroke="#0c58d0" strokeWidth="2" /><path d="M1 3h14" stroke="#0c58d0" strokeWidth="2" /><path d="M4 7h2M4 10h2" stroke="#e85820" strokeWidth="2" /><path d="M7.500 7h2M7.500 10h2" stroke="#2060c0" strokeWidth="2" /><path d="M11 7h2M11 10h2" stroke="#28a028" strokeWidth="2" /></Smooth><Caret /></button>
          </div>
        </div>
        <div className="mt-[7px] flex min-h-0 grow gap-[7px] overflow-hidden">
          <div className="w-[85px] shrink-0 border-r border-[#d4d0c0] bg-[#faf9f4] pt-[6px]">
            {places.map((p) => (
              <button key={p.lines[0]} className={`flex w-full flex-col items-center leading-[13px] ${p.h}`}>{p.icon}{p.lines.map((l) => <span key={l} className="block">{l}</span>)}</button>
            ))}
          </div>
          <ul className="grow border border-[#7f9db9] bg-white pt-px [&>li]:flex [&>li]:h-[17px] [&>li]:items-center [&>li]:gap-[2px]">
            <li><Note />EmployeeTest</li>
            <li><Note />3-4-Java Массив строк Примеры</li>
          </ul>
        </div>
      </div>
    </section>
  );
}

/* ---------- desktop and taskbar ---------- */

function Wallpaper() {
  return (
    <svg className="absolute inset-0 size-full" viewBox="0 0 1024 738" preserveAspectRatio="none" aria-hidden="true">
      <defs>
        <linearGradient id="sky" x1="0" y1="0" x2="0" y2="1"><stop offset="0" stopColor="#d4e0f4" /><stop offset=".15" stopColor="#b0c8f2" /><stop offset=".22" stopColor="#2c68dc" /><stop offset=".45" stopColor="#2c60d4" /><stop offset=".6" stopColor="#6c9cec" /><stop offset=".85" stopColor="#b8ccf0" /><stop offset="1" stopColor="#90a8e0" /></linearGradient>
        <linearGradient id="grass" x1="0" y1="0" x2="0" y2="1"><stop offset="0" stopColor="#2e5a2c" /><stop offset=".25" stopColor="#4c8a20" /><stop offset=".5" stopColor="#6aa428" /><stop offset=".54" stopColor="#284818" /><stop offset="1" stopColor="#2c5018" /></linearGradient>
        <filter id="soft"><feGaussianBlur stdDeviation="4" /></filter>
      </defs>
      <rect width="1024" height="500" fill="url(#sky)" />
      <g filter="url(#soft)" fill="#eef2fa"><ellipse cx="930" cy="4" rx="60" ry="10" /><ellipse cx="1018" cy="60" rx="14" ry="24" /><ellipse cx="1010" cy="145" rx="9" ry="16" opacity=".6" /><ellipse cx="1012" cy="345" rx="14" ry="10" opacity=".7" /><ellipse cx="1014" cy="430" rx="16" ry="20" opacity=".5" /></g>
      <path d="M1000 468l14-5 10 3v25h-24z" fill="#5c6cac" />
      <path d="M1000 486h24v252h-24z" fill="url(#grass)" />
    </svg>
  );
}

const DesktopFile = ({ pdf }: { pdf?: boolean }) => (
  <Smooth w={30} h={14}>
    <path d="M3 0h19l7 13H3z" fill="#f8f8fa" stroke="#999" /><path d="M21 3v9h8z" fill={pdf ? "#eee" : "#d0e8fc"} stroke="#7090a8" /><path d={pdf ? "M0 4h23v9H0z" : "M1 5h16v8H1z"} fill={pdf ? "#b01824" : "#4878c8"} />
    <text x={pdf ? 4 : 2} y="12" fontFamily="Liberation Sans" fontWeight="700" fontSize="8" fill="#fff">{pdf ? "PDF" : "747"}</text>
  </Smooth>
);

function Taskbar() {
  const tasks = [
    { name: "Лб 4  Мониторинг...", icon: <Smooth><path d="M5 1h9v14H5z" fill="#fff" stroke="#6888c0" /><path d="M7 5h6M7 8h6M7 11h6" stroke="#88a" /><path d="M0 3h10v10H0z" fill="#2860b8" /><path d="M2 5l1.500 6L5 6l1.500 5L8 5" stroke="#fff" strokeWidth="1.500" /></Smooth> },
    { name: "Результаты поиска", icon: <Smooth><path d="M3 1h8l3 3v11H3z" fill="#f4faff" stroke="#78a0c8" /><circle cx="8" cy="7" r="4" fill="#a8dcf8" stroke="#5888b0" strokeWidth="1.500" /><path d="M5 10l-4 5" stroke="#e0d0b0" strokeWidth="2" /></Smooth> },
    { name: "Диспетчер задач...", icon: <Px><path d="M2 1h11v9H2z" fill="#ddd" stroke="#444" /><path d="M4 3h8v5H4z" fill="#021" /><path d="M4 6h2l1-2 1 3 1-1h3" stroke="#3f6" fill="none" /><path d="M1 11h13l2 3H1z" fill="#ddd" stroke="#222" /></Px> },
    { name: "Производительн...", icon: <PerfIcon />, on: true },
    { name: "Безымянный - Бл...", icon: <Smooth><path d="M3 2l9 0 2 12-9 1z" fill="#70c8e0" stroke="#d0ecf4" /><path d="M3 2h9" stroke="#fff" strokeWidth="2" strokeDasharray="1 1" /><path d="M12 3l2 11-9 1" stroke="#3c5c90" /></Smooth> },
  ];
  return (
    <footer className="relative z-10 flex h-[30px] shrink-0 items-center overflow-hidden bg-[linear-gradient(#3c84f0_0%,#3a7cf0_8%,#245edb_18%,#245cdc_85%,#1c48b0_100%)] text-white">
      <button className="flex h-full w-24 items-center gap-[5px] rounded-r-[12px] bg-[linear-gradient(#5cac58_0%,#3c943c_15%,#379a36_60%,#2b7a2c_100%)] pl-[10px] font-['Open_Sans','DejaVu_Sans',sans-serif] text-[17px] font-bold italic shadow-[inset_-3px_-2px_4px_#1c601e,2px_0_3px_#103c90] [text-shadow:1px_1px_2px_#123]">
        <Smooth w={19} h={18}><path d="M4 2q3-2 5 0l-2 6Q5 6 2 8z" fill="#f05828" /><path d="M10 2q3 2 7 0l-2 6q-3 2-7 0z" fill="#80c838" /><path d="M2 9q3-2 5 0l-2 6q-2-2-5 0z" fill="#58a0f8" /><path d="M8 9q3 2 7 0l-2 6q-3 2-7 0z" fill="#fcd030" /></Smooth>
        пуск
      </button>
      <nav className="ml-[9px] flex min-w-0 gap-px">
        {tasks.map((t) => (
          <button key={t.name} className={`flex h-6 w-[145px] items-center gap-1 rounded-[2px] pl-[9px] text-left ${t.on ? "bg-[#1e52b7] shadow-[inset_1px_1px_2px_#0c3080]" : "bg-[linear-gradient(#5c98fa,#3c81f3_20%,#3878ee)] shadow-[inset_-1px_-1px_#2c60cc]"}`}>{t.icon}<span className="overflow-hidden whitespace-pre">{t.name}</span></button>
        ))}
      </nav>
      <button className="ml-2 bg-[#316ac5] px-[1px] leading-4">RU</button>
      <div className="relative ml-auto flex h-full w-[147px] items-center gap-[3px] border-l border-[#1042af] bg-[linear-gradient(#1898f0_0%,#18b9f8_6%,#1290e8_18%,#14a0f0_85%,#0c70c0_100%)] pr-[13px] pl-[12px]">
        <button aria-label="Скрытые значки" className="absolute left-[-9px] flex size-[18px] items-center justify-center rounded-full border border-[#b0dcfc] bg-[radial-gradient(circle_at_35%_30%,#6cc0fc,#1058d0)]"><Chevron dir="l" color="#fff" /></button>
        <Px w={12} h={14}><path d="M0 1h12v12H0z" fill="#042" /><path d="M1 3h11M1 5h11M1 7h11M1 9h11M1 11h11" stroke="#0a3" strokeDasharray="1 1" /><path d="M0 1h12v12H0z" fill="none" stroke="#cdc" /></Px>
        <Smooth w={17}><path d="M1 3h8v6H1z" fill="#234" stroke="#99a" /><path d="M2 13h6M5 10v4" stroke="#ccd" strokeWidth="2" /><path d="M11 4q1 2 0 5M13 3q2 3 0 7M15 2q2 4 0 9" stroke="#d8e8f8" /></Smooth>
        <Smooth w={15}><path d="M0 1h15v14H0z" fill="#fff" /><path d="M1 2h4v5l5-5h5L8 8l6 7H9l-4-5v5H1z" fill="#d81818" /><path d="M8 15v-1l5-1-5-5 1-1 5 5 1-5v8z" fill="#111" /></Smooth>
        <Smooth><path d="M1 2h14v10H1z" fill="#081008" stroke="#556" strokeWidth="2" /><path d="M4 14.500h8" stroke="#778" strokeWidth="2" /><path d="M3 10h5l1-1 1 1h3" stroke="#1a6" /></Smooth>
        <Smooth><path d="M0 9l6-6h6l3 5-6 3z" fill="#f0f4f8" stroke="#556" /><path d="M3 7l9 1" stroke="#68a" strokeWidth="2" /><circle cx="11" cy="11" r="4.500" fill="#38b038" stroke="#186818" /><path d="M9 11l2 2 3-4" stroke="#fff" strokeWidth="1.500" /></Smooth>
        <time className="ml-auto">23:20</time>
      </div>
    </footer>
  );
}

export default function App() {
  return (
    <div className={`flex h-screen flex-col overflow-hidden text-[11px] leading-[14px] text-black ${ui}`}>
      <main className="relative min-h-0 grow overflow-hidden">
        <Wallpaper />
        <div className="absolute top-0 left-[803px]"><DesktopFile pdf /></div>
        <div className="absolute top-0 left-[882px]"><DesktopFile /></div>
        <div className="absolute top-0 left-[959px]"><DesktopFile pdf /></div>
        <span className="absolute top-[40px] left-[1006px] text-white [text-shadow:1px_1px_1px_#222]">2</span>
        <span className="absolute top-[366px] left-[1004px] text-white [text-shadow:1px_1px_1px_#222]">п</span>
        <WordWindow />
        <NotepadWindow />
        <SaveDialog />
        <PerformanceWindow />
      </main>
      <Taskbar />
    </div>
  );
}
